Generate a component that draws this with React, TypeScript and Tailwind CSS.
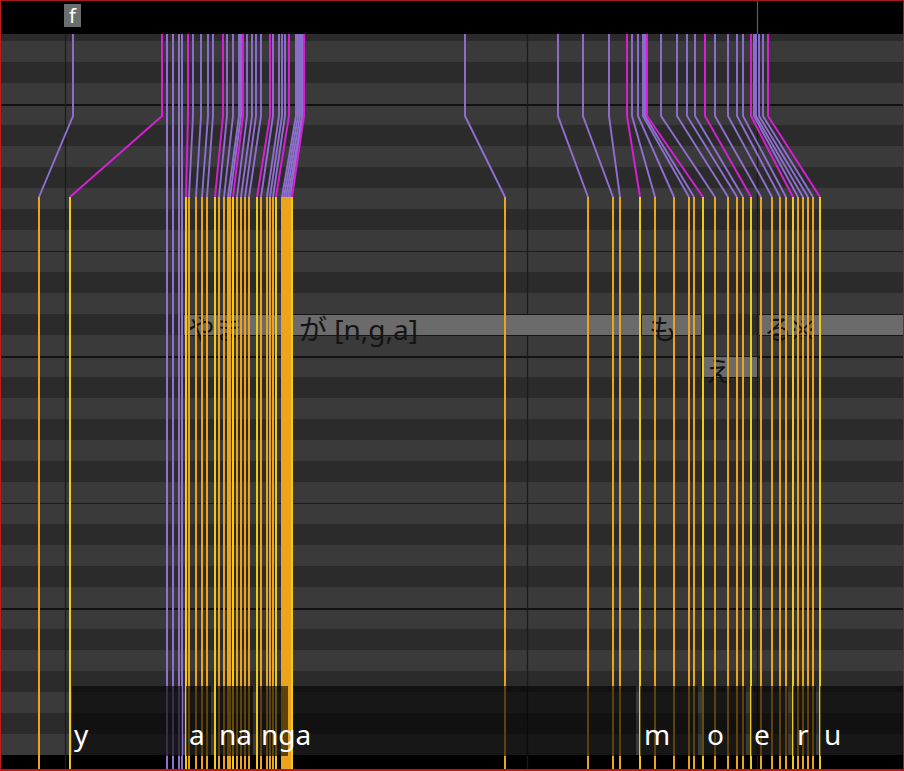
const L = "bg-[#3a3a3a]";
const D = "bg-[#2b2b2b]";

// one octave of the piano roll, top row sits directly under the thick line
const octave = [L, D, L, D, L, D, L, L, D, L, D, L];
const rows: { c: string; line: string }[] = [];
for (let i = 0; i < 35; i++) {
  const idx = ((i - 4) % 12 + 12) % 12;
  let line = "";
  if (idx === 0) line = "border-t-2 border-[#121212]";
  if (idx === 7) line = "border-t border-[#1c1c1c]";
  rows.push({ c: octave[idx], line });
}

const straightPurple = [167, 173, 179, 182];
const purple: [number, number][] = [
  [73, 39], [193, 189], [201, 196], [208, 202], [213, 207], [227, 219], [233, 224], [239, 228], [241, 230],
  [247, 237], [252, 241], [256, 245], [261, 249], [273, 261], [279, 267], [282, 270], [285, 273],
  [296, 282], [298, 284], [300, 286], [302, 288], [303, 290],
  [465, 505], [558, 588], [583, 613], [609, 620], [632, 655], [638, 674], [643, 689], [645, 694],
  [661, 715], [677, 728], [687, 737], [695, 743], [715, 761], [728, 772], [737, 780], [743, 786],
  [754, 798], [756, 803], [759, 808], [763, 813],
];
const magenta: [number, number][] = [
  [162, 70], [188, 186], [223, 215], [243, 233], [270, 257], [289, 276], [304, 292],
  [627, 640], [647, 703], [705, 751], [751, 793], [768, 820],
];

function Grid() {
  return (
    <svg className="absolute left-0 top-0" width="904" height="771" viewBox="0 0 904 771" fill="none">
      <path d="M65.5 34V771M527.5 34V771M757.5 34V771" stroke="#1b1b1b" strokeWidth="1.3" />
      <path d="M757.5 0V34" stroke="#5a5a5a" strokeWidth="1.3" />
    </svg>
  );
}

function Lines() {
  return (
    <svg className="absolute left-0 top-0" width="904" height="771" viewBox="0 0 904 771" fill="none">
      {straightPurple.map((x) => (
        <path key={x} d={`M${x} 34V771`} stroke="#8f6fd0" strokeWidth="2" />
      ))}
      {purple.map(([a, b]) => (
        <g key={`p${a}`}>
          <path d={`M${a} 34V116L${b} 197`} stroke="#8f6fd0" strokeWidth="1.9" />
          <path d={`M${b} 197V771`} stroke="#eca41c" strokeWidth="2" />
        </g>
      ))}
      {magenta.map(([a, b]) => (
        <g key={`m${a}`}>
          <path d={`M${a} 34V116L${b} 197`} stroke="#d420d2" strokeWidth="2" />
          <path d={`M${b} 197V771`} stroke="#f0ca18" strokeWidth="2" />
        </g>
      ))}
    </svg>
  );
}

const laneText = "text-[#141414] text-[28px] leading-[28px] whitespace-nowrap";
const bar = "h-[22px] shrink-0 bg-[#6b6b6b] border-y border-[#161616] flex";
const block = "h-full shrink-0 bg-black/60 flex items-end";
const label = "relative z-10 text-white text-[28px] leading-[38px] pb-[3px]";

export default function App() {
  return (
    <div
      className="relative w-[904px] h-[771px] overflow-hidden flex flex-col bg-black"
      style={{ fontFamily: '"Noto Sans", "Noto Sans CJK JP", sans-serif' }}
    >
      <div className="h-[34px] shrink-0 bg-black" />
      <div className={`h-[7px] shrink-0 ${D}`} />
      {rows.slice(1).map((r, i) => (
        <div key={i} className={`h-[21px] shrink-0 box-border ${r.c} ${r.line}`} />
      ))}

      <Grid />

      {/* lyric lanes */}
      <div className="absolute left-0 top-[314px] w-full flex">
        <div className="w-[184px] shrink-0" />
        <div className={`${bar} w-[456px] pl-[3px]`}>
          <span className={`${laneText} w-[28px]`}>や</span>
          <span className={`${laneText} w-[84px]`}>ま</span>
          <span className={laneText}>が [n,g,a]</span>
        </div>
        <div className={`${bar} w-[60px] ml-[1px] border-l pl-[7px]`}>
          <span className={laneText}>も</span>
        </div>
        <div className="w-[58px] shrink-0" />
        <div className={`${bar} w-[146px] pl-[5px]`}>
          <span className={`${laneText} w-[27px]`}>る</span>
          <span className={laneText}>※</span>
        </div>
      </div>
      <div className="absolute left-0 top-[356px] w-full flex">
        <div className="w-[701px] shrink-0" />
        <div className={`${bar} w-[56px] border-l pl-[3px]`}>
          <span className={laneText}>え</span>
        </div>
      </div>

      <Lines />

      {/* f marker */}
      <div className="absolute left-[64px] top-[4px] w-[17px] h-[23px] bg-[#6a6e6e] text-white text-[20px] leading-[23px] text-center">
        f
      </div>

      {/* phoneme band */}
      <div className="absolute left-0 top-[686px] w-full h-[70px] flex">
        <div className="w-[72px] shrink-0" />
        <div className={`${block} w-[110px] pl-[2px]`}><span className={label}>y</span></div>
        <div className="w-[4px] shrink-0" />
        <div className={`${block} w-[25px] pl-[3px]`}><span className={label}>a</span></div>
        <div className="w-[5px] shrink-0" />
        <div className={`${block} w-[37px] pl-[3px]`}><span className={label}>na</span></div>
        <div className="w-[5px] shrink-0" />
        <div className={`${block} w-[30px] pl-[3px]`}><span className={label}>nga</span></div>
        <div className="w-[5px] shrink-0" />
        <div className={`${block} w-[343px]`} />
        <div className="w-[4px] shrink-0" />
        <div className={`${block} w-[58px] pl-[4px]`}><span className={label}>m</span></div>
        <div className="w-[4px] shrink-0" />
        <div className={`${block} w-[44px] pl-[5px]`}><span className={label}>o</span></div>
        <div className="w-[5px] shrink-0" />
        <div className={`${block} w-[37px] pl-[3px]`}><span className={label}>e</span></div>
        <div className="w-[5px] shrink-0" />
        <div className={`${block} w-[23px] pl-[4px]`}><span className={label}>r</span></div>
        <div className="w-[4px] shrink-0" />
        <div className={`${block} w-[84px] pl-[4px]`}><span className={label}>u</span></div>
      </div>

      {/* window frame */}
      <div className="absolute inset-0 border border-[#a81818] border-l-[#c01c1c] border-b-2 border-b-[#d01010]" />
    </div>
  );
}
